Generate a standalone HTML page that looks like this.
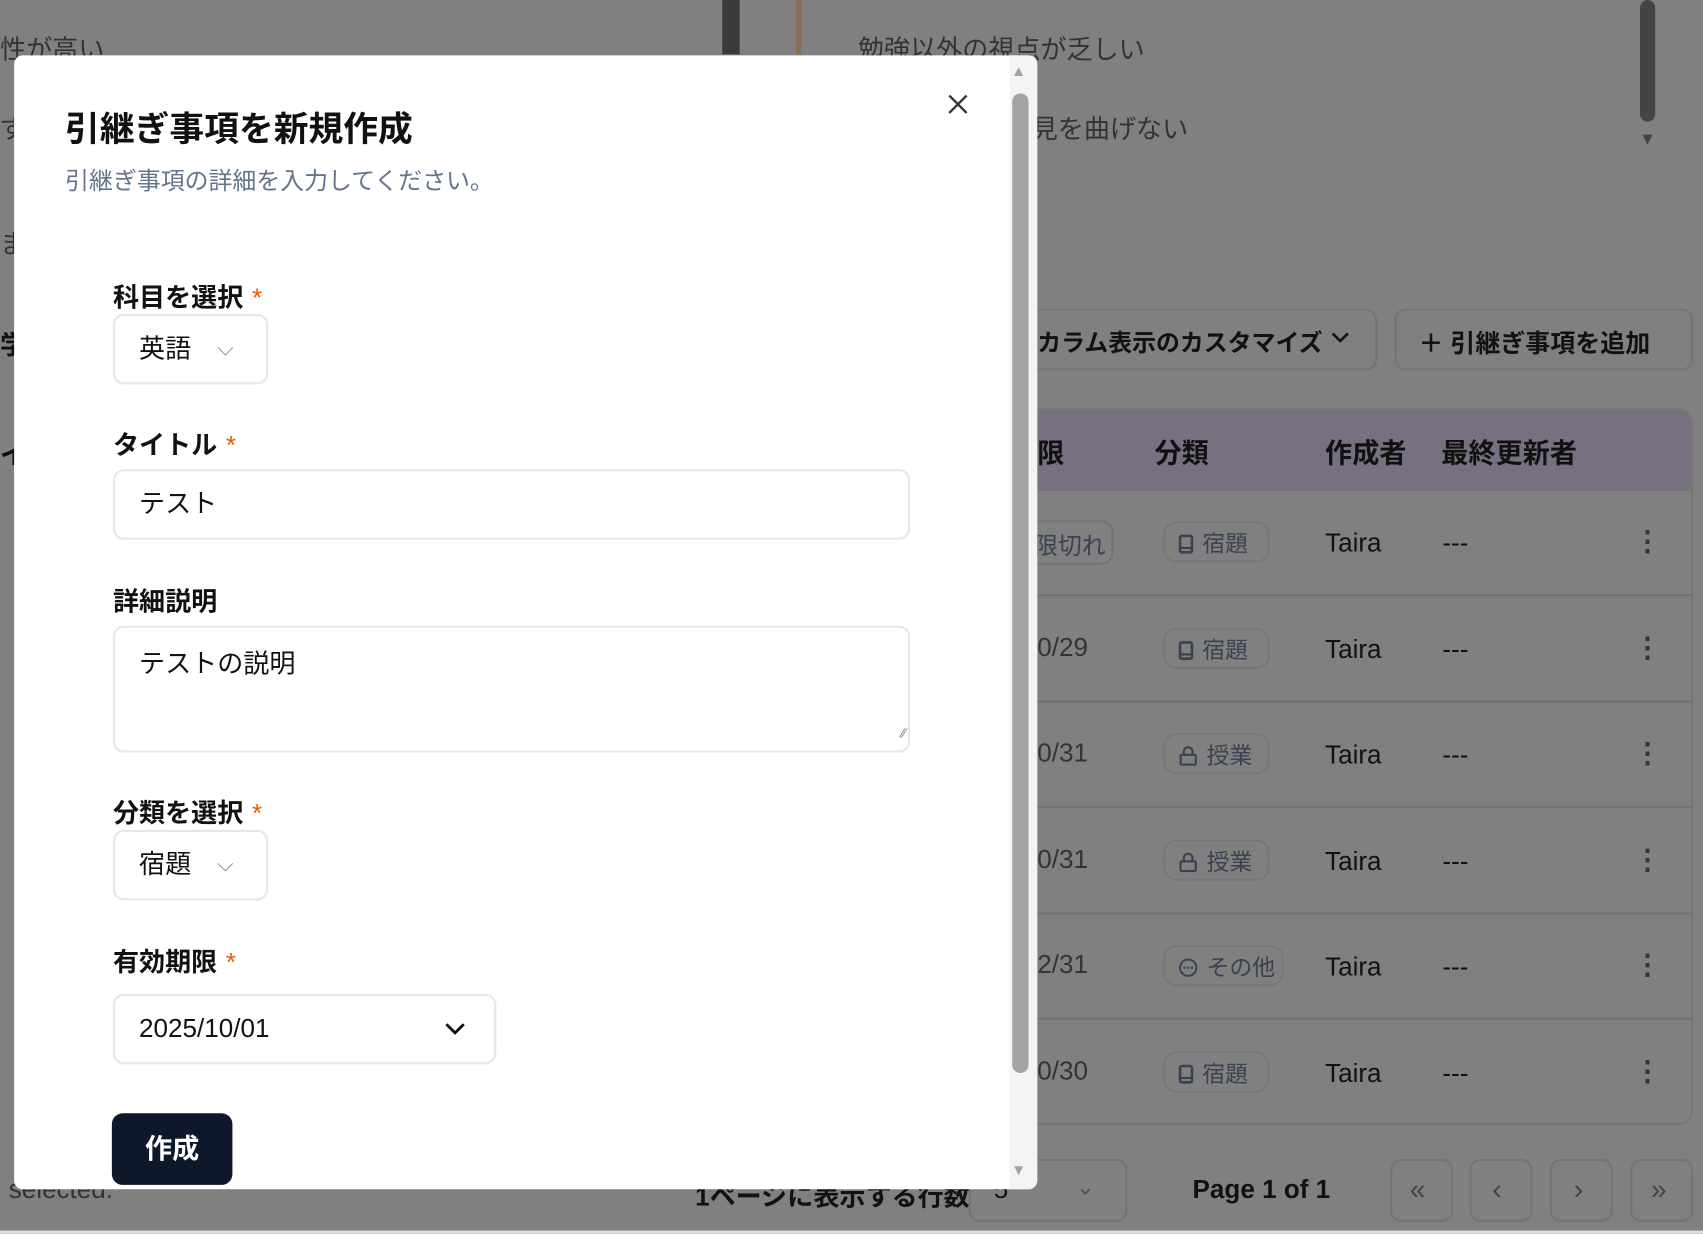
<!DOCTYPE html>
<html><head><meta charset="utf-8"><style>
*{box-sizing:border-box;margin:0;padding:0}
html,body{width:1703px;height:1233px;overflow:hidden;background:#808080}
#w{position:absolute;left:0;top:0;width:1568px;height:1136px;transform:scale(1.08610);transform-origin:0 0;font-family:"Liberation Sans","Noto Sans CJK JP",sans-serif;background:#808080;color:#111}
.a{position:absolute;white-space:nowrap}
.bg{color:#333}
.ol{position:absolute;border:2px solid #747474;border-radius:10px}
.badge{position:absolute;left:1071px;width:98px;height:38px;border:2px solid #777;border-radius:12px;font-size:21px;color:#3a4150;padding:3px 0 0 12px;white-space:nowrap}
.badge svg{vertical-align:-2px;margin-right:8px}
.row{position:absolute;left:940px;width:618px;height:2px;background:#737373}
.m{position:absolute;left:13px;top:51px;width:942px;height:1044px;background:#fff;border-radius:8px}
.lbl{position:absolute;left:104px;font-size:24px;font-weight:bold;color:#111}
.lbl b{color:#ea580c;font-weight:normal;margin-left:8px}
.box{position:absolute;left:104px;border:2px solid #e2e8f0;border-radius:10px;font-size:24px;color:#111;padding-left:22px}
</style></head><body><div id="w">
<div class="a bg" style="left:0;top:26px;font-size:24px">性が高い</div>
<div class="a bg" style="left:790px;top:26px;font-size:24px">勉強以外の視点が乏しい</div>
<div class="a bg" style="left:950px;top:99px;font-size:24px">見を曲げない</div>
<div class="a bg" style="left:0;top:99px;font-size:24px">ず</div>
<div class="a bg" style="left:0;top:205px;font-size:24px">ま</div>
<div class="a" style="left:0;top:298px;font-size:24px;font-weight:bold">学</div>
<div class="a" style="left:0;top:399px;font-size:24px;font-weight:bold">イ</div>
<div style="position:absolute;left:665px;top:0;width:16px;height:50px;background:#3a3a3a"></div>
<div style="position:absolute;left:733px;top:0;width:5px;height:50px;background:#8a7050"></div>
<div style="position:absolute;left:1510px;top:0;width:14px;height:112px;background:#444;border-radius:7px"></div>
<div class="a" style="left:1509px;top:120px;font-size:16px;color:#444">▼</div>
<div class="ol" style="left:925px;top:284px;width:343px;height:57px"></div>
<div class="a" style="left:955px;top:298px;font-size:22px;font-weight:bold">カラム表示のカスタマイズ</div>
<svg style="position:absolute;left:1225px;top:305px" width="18" height="12" viewBox="0 0 18 12"><path d="M2 2L9 9L16 2" fill="none" stroke="#111" stroke-width="2.4"/></svg>
<div class="ol" style="left:1284px;top:284px;width:275px;height:57px"></div>
<div class="a" style="left:1306px;top:297px;font-size:23px;font-weight:bold">＋ 引継ぎ事項を追加</div>
<div style="position:absolute;left:930px;top:376px;width:629px;height:660px;border:2px solid #767676;border-radius:14px;overflow:hidden"><div style="height:74px;background:#767080"></div></div>
<div class="a" style="left:955px;top:398px;font-size:25px;font-weight:bold">限</div>
<div class="a" style="left:1063px;top:398px;font-size:25px;font-weight:bold">分類</div>
<div class="a" style="left:1220px;top:398px;font-size:25px;font-weight:bold">作成者</div>
<div class="a" style="left:1327px;top:398px;font-size:25px;font-weight:bold">最終更新者</div>
<div class="row" style="top:450px"></div><div class="row" style="top:547px"></div><div class="row" style="top:645px"></div><div class="row" style="top:742px"></div><div class="row" style="top:840px"></div><div class="row" style="top:937px"></div>
<div class="ol" style="left:925px;top:479px;width:100px;height:41px"></div>
<div class="a" style="left:952px;top:485px;font-size:22px;color:#3a4150">限切れ</div>
<div class="badge" style="top:480px"><svg width="14" height="18" viewBox="0 0 14 18"><rect x="1.5" y="1.5" width="11" height="15" rx="1.5" fill="none" stroke="#3a4150" stroke-width="2.4"/><path d="M1.5 12.5H12.5" stroke="#3a4150" stroke-width="2"/></svg>宿題</div>
<div class="badge" style="top:578px"><svg width="14" height="18" viewBox="0 0 14 18"><rect x="1.5" y="1.5" width="11" height="15" rx="1.5" fill="none" stroke="#3a4150" stroke-width="2.4"/><path d="M1.5 12.5H12.5" stroke="#3a4150" stroke-width="2"/></svg>宿題</div>
<div class="badge" style="top:675px"><svg width="18" height="18" viewBox="0 0 18 18"><path d="M5 8V5a4 4 0 0 1 8 0v3" fill="none" stroke="#3a4150" stroke-width="2"/><rect x="2" y="8" width="14" height="9" rx="1" fill="none" stroke="#3a4150" stroke-width="2"/></svg>授業</div>
<div class="badge" style="top:773px"><svg width="18" height="18" viewBox="0 0 18 18"><path d="M5 8V5a4 4 0 0 1 8 0v3" fill="none" stroke="#3a4150" stroke-width="2"/><rect x="2" y="8" width="14" height="9" rx="1" fill="none" stroke="#3a4150" stroke-width="2"/></svg>授業</div>
<div class="badge" style="top:870px;width:111px"><svg width="18" height="18" viewBox="0 0 18 18"><circle cx="9" cy="9" r="7.5" fill="none" stroke="#3a4150" stroke-width="1.8"/><circle cx="5.5" cy="9" r="1.1" fill="#3a4150"/><circle cx="9" cy="9" r="1.1" fill="#3a4150"/><circle cx="12.5" cy="9" r="1.1" fill="#3a4150"/></svg>その他</div>
<div class="badge" style="top:968px"><svg width="14" height="18" viewBox="0 0 14 18"><rect x="1.5" y="1.5" width="11" height="15" rx="1.5" fill="none" stroke="#3a4150" stroke-width="2.4"/><path d="M1.5 12.5H12.5" stroke="#3a4150" stroke-width="2"/></svg>宿題</div>
<div class="a" style="left:955px;top:583px;font-size:24px;color:#333">0/29</div>
<div class="a" style="left:955px;top:680px;font-size:24px;color:#333">0/31</div>
<div class="a" style="left:955px;top:778px;font-size:24px;color:#333">0/31</div>
<div class="a" style="left:955px;top:875px;font-size:24px;color:#333">2/31</div>
<div class="a" style="left:955px;top:973px;font-size:24px;color:#333">0/30</div>
<div class="a" style="left:1220px;top:488px;font-size:24px;line-height:97.5px;margin-top:-36px">Taira<br>Taira<br>Taira<br>Taira<br>Taira<br>Taira</div>
<div class="a" style="left:1328px;top:488px;font-size:24px;line-height:97.5px;margin-top:-36px">---<br>---<br>---<br>---<br>---<br>---</div>
<div class="a" style="left:1504px;top:486px;font-size:26px;line-height:97.5px;margin-top:-36px;font-weight:bold;color:#333">⋮<br>⋮<br>⋮<br>⋮<br>⋮<br>⋮</div>
<div class="a" style="left:8px;top:1082px;font-size:24px;color:#333">selected.</div>
<div class="a" style="left:640px;top:1082px;font-size:24px;font-weight:bold">1ページに表示する行数</div>
<div class="ol" style="left:892px;top:1067px;width:146px;height:58px"></div>
<div class="a" style="left:915px;top:1082px;font-size:24px">5</div>
<div class="a" style="left:990px;top:1080px;font-size:22px;color:#555">⌄</div>
<div class="a" style="left:1098px;top:1082px;font-size:24px;font-weight:bold">Page 1 of 1</div>
<div class="ol" style="left:1280px;top:1067px;width:58px;height:58px"></div><div class="ol" style="left:1353px;top:1067px;width:58px;height:58px"></div><div class="ol" style="left:1427px;top:1067px;width:58px;height:58px"></div><div class="ol" style="left:1501px;top:1067px;width:58px;height:58px"></div>
<div class="a" style="left:1298px;top:1080px;font-size:26px;color:#444">«</div><div class="a" style="left:1374px;top:1080px;font-size:26px;color:#444">‹</div><div class="a" style="left:1449px;top:1080px;font-size:26px;color:#444">›</div><div class="a" style="left:1520px;top:1080px;font-size:26px;color:#444">»</div>
<div style="position:absolute;left:0;top:1133px;width:1568px;height:3px;background:#ddd"></div>

<div class="m">
<div style="position:absolute;left:917px;top:0;width:25px;height:1044px;background:#f4f4f4;border-radius:0 8px 8px 0"></div>
<div style="position:absolute;left:919px;top:35px;width:15px;height:902px;background:#a3a3a3;border-radius:8px"></div>
<div class="a" style="left:918px;top:6px;font-size:14px;color:#a3a3a3">▲</div>
<div class="a" style="left:918px;top:1018px;font-size:14px;color:#a3a3a3">▼</div>
</div>
<div class="a" style="left:60px;top:94px;font-size:32px;font-weight:bold;color:#111">引継ぎ事項を新規作成</div>
<div class="a" style="left:60px;top:149px;font-size:22px;color:#64748b">引継ぎ事項の詳細を入力してください。</div>
<svg style="position:absolute;left:872px;top:86px" width="20" height="20" viewBox="0 0 20 20"><path d="M2 2L18 18M18 2L2 18" stroke="#333" stroke-width="2.2"/></svg>
<div class="lbl" style="top:254px">科目を選択<b>*</b></div>
<div class="box" style="top:289px;width:143px;height:65px;line-height:61px">英語<span style="position:absolute;left:94px;top:0;color:#888;font-size:20px">⌵</span></div>
<div class="lbl" style="top:390px">タイトル<b>*</b></div>
<div class="box" style="top:432px;width:734px;height:65px;line-height:61px">テスト</div>
<div class="lbl" style="top:534px">詳細説明</div>
<div class="box" style="top:576px;width:734px;height:117px;padding-top:18px;line-height:32px">テストの説明<span style="position:absolute;right:2px;bottom:0;color:#777;font-size:12px">⁄⁄</span></div>
<div class="lbl" style="top:729px">分類を選択<b>*</b></div>
<div class="box" style="top:764px;width:143px;height:65px;line-height:61px">宿題<span style="position:absolute;left:94px;top:0;color:#888;font-size:20px">⌵</span></div>
<div class="lbl" style="top:866px">有効期限<b>*</b></div>
<div class="box" style="top:915px;width:353px;height:65px;line-height:61px">2025/10/01<svg style="position:absolute;left:302px;top:23px" width="22" height="14" viewBox="0 0 22 14"><path d="M3 3L11 11L19 3" fill="none" stroke="#111" stroke-width="2.6"/></svg></div>
<div style="position:absolute;left:103px;top:1025px;width:111px;height:66px;background:#0f172a;border-radius:10px;color:#fff;font-size:25px;font-weight:bold;text-align:center;line-height:66px">作成</div>
</div></body></html>
